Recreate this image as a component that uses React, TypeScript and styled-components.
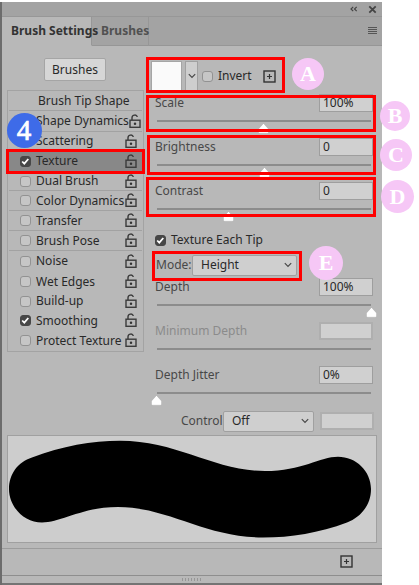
import React from "react";
import styled, { createGlobalStyle } from "styled-components";

const Global = createGlobalStyle`
  * { box-sizing: border-box; }
  body { margin: 0; background: #fff; font-family: "Noto Sans", "Open Sans", sans-serif; font-size: 12px; color: #292929; }
`;

const Page = styled.main`
  position: relative;
  width: 419px;
  height: 585px;
  overflow: hidden;
  padding-top: 2px;
`;

const Panel = styled.section`
  width: 382px;
  height: 583px;
  display: flex;
  flex-direction: column;
  background: #b8b8b8;
  border-left: 2px solid #6c6c6c;
`;

const TitleBar = styled.header`
  height: 14px;
  flex: none;
  display: flex;
  align-items: center;
  justify-content: flex-end;
  gap: 10px;
  padding-right: 5px;
  background: #a3a3a3;
`;

const TabBar = styled.nav`
  height: 30px;
  flex: none;
  display: flex;
  background: #a3a3a3;
`;

const Tab = styled.div<{ $active?: boolean; $width: number }>`
  width: ${(p) => p.$width}px;
  padding: 5px 0 0 9px;
  line-height: 18px;
  font-weight: 700;
  white-space: nowrap;
  color: ${(p) => (p.$active ? "#333" : "#515151")};
  background: ${(p) => (p.$active ? "#b8b8b8" : "transparent")};
  border-top: 1px solid #979797;
  border-right: 1px solid #979797;
  border-bottom: 1px solid ${(p) => (p.$active ? "#b8b8b8" : "#969696")};
`;

const TabFill = styled.div`
  flex: 1;
  display: flex;
  justify-content: flex-end;
  padding: 10px 5px 0 0;
  border-top: 1px solid #979797;
  border-bottom: 1px solid #969696;
`;

const Text = styled.span<{ $w?: number; $dim?: boolean; $soft?: boolean }>`
  display: block;
  width: ${(p) => (p.$w ? p.$w + "px" : "auto")};
  line-height: 16px;
  white-space: nowrap;
  color: ${(p) => (p.$dim ? "#8b8b8b" : p.$soft ? "#484848" : "#292929")};
`;

const Body = styled.div`
  height: 389px;
  flex: none;
  display: flex;
`;

const Sidebar = styled.aside`
  width: 142px;
  padding: 12px 0 0 5px;
`;

const BrushesButton = styled.button`
  display: block;
  width: 62px;
  height: 23px;
  margin: 0 0 9px 37px;
  padding: 0;
  font: inherit;
  color: #292929;
  background: #d6d6d6;
  border: 1px solid #a5a5a5;
  border-radius: 2px;
`;

const OptionList = styled.div`
  height: 262px;
  width: 137px;
  border: 1px solid #a3a3a3;
  padding: 0 1px;
`;

const Option = styled.div<{ $h: number; $line?: boolean; $selected?: boolean }>`
  height: ${(p) => p.$h}px;
  display: flex;
  align-items: center;
  padding-left: 11px;
  background: ${(p) => (p.$selected ? "#888" : "transparent")};
  border-bottom: 1px solid ${(p) => (p.$line ? "#a2a2a2" : "transparent")};
`;

const TipTitle = styled(Text)`
  margin-left: 18px;
`;

const OptionText = styled(Text)`
  flex: 1;
  margin-left: 5px;
`;

const Check = styled.span<{ $on?: boolean }>`
  width: 11px;
  height: 11px;
  flex: none;
  display: flex;
  align-items: center;
  justify-content: center;
  border-radius: 3px;
  border: 1px solid ${(p) => (p.$on ? "#474747" : "#929292")};
  background: ${(p) => (p.$on ? "#474747" : "#c6c6c6")};
`;

const LockSlot = styled.span`
  width: 17px;
  flex: none;
  display: flex;
`;

const Controls = styled.div`
  width: 236px;
  padding: 12px 0 0 5px;
`;

const TextureRow = styled.div`
  height: 36px;
  display: flex;
  align-items: center;
  padding-left: 2px;
`;

const Swatch = styled.div`
  width: 31px;
  height: 31px;
  border: 1px solid #a5a5a5;
  background: #fafafa;
`;

const Drop = styled.div`
  width: 13px;
  height: 31px;
  margin: 0 4px 0 3px;
  display: flex;
  align-items: center;
  justify-content: center;
  border: 1px solid #a1a1a1;
  background: #cecece;
`;

const InvertText = styled(Text)`
  width: 45px;
  margin-left: 5px;
`;

const SliderBlock = styled.div<{ $h: number }>`
  height: ${(p) => p.$h}px;
  padding-left: 6px;
`;

const SliderHead = styled.div`
  height: 18px;
  display: flex;
  justify-content: space-between;
  align-items: center;
  padding-right: 7px;
`;

const Field = styled.div<{ $off?: boolean }>`
  width: 54px;
  height: 18px;
  padding-left: 3px;
  line-height: 16px;
  background: #d0d0d0;
  border: ${(p) => (p.$off ? "2px solid #afafaf" : "1px solid #9e9e9e")};
  color: #292929;
`;

const Rail = styled.div`
  height: 2px;
  width: 214px;
  margin: 8px 0 0 2px;
  background: #8c8c8c;
`;

const Thumb = styled.svg<{ $x: number }>`
  display: block;
  margin-top: 1px;
  margin-left: ${(p) => p.$x}px;
`;

const TipRow = styled.div`
  height: 24px;
  margin-top: 9px;
  display: flex;
  align-items: center;
  gap: 5px;
  padding-left: 6px;
`;

const ModeRow = styled.div<{ $control?: boolean }>`
  display: flex;
  align-items: center;
  height: ${(p) => (p.$control ? 20 : 26)}px;
  padding-left: ${(p) => (p.$control ? 32 : 7)}px;
`;

const Select = styled.div<{ $w: number }>`
  width: ${(p) => p.$w}px;
  height: 21px;
  display: flex;
  align-items: center;
  justify-content: space-between;
  padding: 0 4px 0 8px;
  margin-right: 6px;
  background: #cfcfcf;
  border: 1px solid #a0a0a0;
  border-radius: 2px;
`;

const Preview = styled.div`
  width: 370px;
  height: 108px;
  flex: none;
  margin-left: 5px;
  background: #cdcdcd;
  border: 1px solid #a0a0a0;
  svg { display: block; }
`;

const Footer = styled.footer`
  height: 27px;
  flex: none;
  margin-top: 5px;
  padding: 6px 29px 0 0;
  display: flex;
  justify-content: flex-end;
  border-top: 1px solid #9c9c9c;
`;

const Grip = styled.div`
  height: 10px;
  flex: none;
  display: flex;
  align-items: center;
  justify-content: center;
  gap: 1px;
  border-top: 1px solid #8e8e8e;
  border-bottom: 2px solid #747474;
`;

const Tick = styled.i`
  width: 1px;
  height: 3px;
  margin-right: 1px;
  background: #969696;
`;

/* Callouts float over the panel and label regions of it. */
const Frame = styled.div<{ $x: number; $y: number; $w: number; $h: number }>`
  position: absolute;
  left: ${(p) => p.$x}px;
  top: ${(p) => p.$y}px;
  width: ${(p) => p.$w}px;
  height: ${(p) => p.$h}px;
  border: 3px solid #fe0000;
`;

const Badge = styled.div<{ $x: number; $y: number; $d: number; $blue?: boolean }>`
  position: absolute;
  left: ${(p) => p.$x - p.$d / 2}px;
  top: ${(p) => p.$y - p.$d / 2}px;
  width: ${(p) => p.$d}px;
  height: ${(p) => p.$d}px;
  border-radius: 50%;
  background: ${(p) => (p.$blue ? "#3e6be8" : "#f6c7f6")};
  color: #fff;
  font-family: "Liberation Serif", serif;
  font-weight: ${(p) => (p.$blue ? 400 : 700)};
  font-size: ${(p) => (p.$blue ? 29 : 22)}px;
  -webkit-text-stroke: ${(p) => (p.$blue ? "0.7px #fff" : "0")};
  line-height: ${(p) => p.$d}px;
  text-align: center;
`;

const Chevron = () => (
  <svg width="8" height="6" viewBox="0 0 8 6" fill="none" stroke="#484848" strokeWidth="1.2"><path d="M.8 1.2 4 4.4 7.2 1.2" /></svg>
);

const PlusBox = () => (
  <svg width="13" height="13" viewBox="0 0 13 13" fill="none" stroke="#333">
    <rect x="1" y="1" width="11" height="11" strokeWidth="1.4" /><path d="M6.5 4v5M4 6.5h5" strokeWidth="1.2" />
  </svg>
);

const Lock = () => (
  <svg width="12" height="15" viewBox="0 0 12 15" fill="none" stroke="#3b3b3b">
    <path d="M3 6V3.7C3 .4 8.2.2 8.2 3.1" strokeWidth="1.4" />
    <rect x="1" y="6.2" width="10" height="7.1" strokeWidth="1.4" />
    <circle cx="6" cy="9.8" r="1.25" fill="#333" stroke="none" />
  </svg>
);

const CheckBox = ({ on }: { on?: boolean }) => (
  <Check $on={on}>
    {on && <svg width="9" height="9" viewBox="0 0 9 9" fill="none" stroke="#fff" strokeWidth="1.8"><path d="m1.2 4.5 2.1 2.2 4-4.7" /></svg>}
  </Check>
);

type SliderProps = { label: string; value?: string; at?: number; h: number; off?: boolean };
const Slider = ({ label, value, at, h, off }: SliderProps) => (
  <SliderBlock $h={h}>
    <SliderHead>
      <Text $soft $dim={off}>{label}</Text>
      <Field $off={off}>{value}</Field>
    </SliderHead>
    <Rail />
    {at !== undefined && (
      <Thumb $x={at} width="11" height="11" viewBox="0 0 11 11"><path d="M5.5.4 10.5 6v3.2q0 1-1 1h-8q-1 0-1-1V6Z" fill="#fff" stroke="#999" strokeWidth=".3" /></Thumb>
    )}
  </SliderBlock>
);

const options = [
  { name: "Shape Dynamics", h: 21, line: true },
  { name: "Scattering", h: 19, line: true },
  { name: "Texture", h: 21, on: true, selected: true },
  { name: "Dual Brush", h: 19, line: true },
  { name: "Color Dynamics", h: 20, line: true },
  { name: "Transfer", h: 20, line: true },
  { name: "Brush Pose", h: 20, line: true },
  { name: "Noise", h: 21 },
  { name: "Wet Edges", h: 20 },
  { name: "Build-up", h: 19 },
  { name: "Smoothing", h: 20, on: true },
  { name: "Protect Texture", h: 20 },
];

const frames = [
  [146, 57, 139, 36],
  [146, 95, 230, 37],
  [147, 135, 229, 40],
  [146, 177, 230, 40],
  [152, 251, 150, 30],
  [6, 149, 139, 25],
];

export default function App() {
  return (
    <>
      <Global />
      <Page>
        <Panel>
          <TitleBar>
            <svg width="8" height="6" viewBox="0 0 8 6" fill="none" stroke="#444" strokeWidth="1.2"><path d="M3.2.8 1 3l2.2 2.2M6.7.8 4.5 3l2.2 2.2" /></svg>
            <svg width="9" height="9" viewBox="0 0 9 9" stroke="#444" strokeWidth="1.8"><path d="m1.3 1.3 6.4 6.4M7.7 1.3 1.3 7.7" /></svg>
          </TitleBar>
          <TabBar>
            <Tab $active $width={90}>Brush Settings</Tab>
            <Tab $width={57}>Brushes</Tab>
            <TabFill>
              <svg width="9" height="8" viewBox="0 0 9 8" stroke="#555"><path d="M0 .5h9M0 2.5h9M0 4.5h9M0 6.5h9" /></svg>
            </TabFill>
          </TabBar>
          <Body>
            <Sidebar>
              <BrushesButton>Brushes</BrushesButton>
              <OptionList>
                <Option $h={20} $line><TipTitle>Brush Tip Shape</TipTitle></Option>
                {options.map((o) => (
                  <Option key={o.name} $h={o.h} $line={o.line} $selected={o.selected}>
                    <CheckBox on={o.on} />
                    <OptionText>{o.name}</OptionText>
                    <LockSlot><Lock /></LockSlot>
                  </Option>
                ))}
              </OptionList>
            </Sidebar>
            <Controls>
              <TextureRow>
                <Swatch />
                <Drop><Chevron /></Drop>
                <CheckBox />
                <InvertText>Invert</InvertText>
                <PlusBox />
              </TextureRow>
              <Slider label="Scale" value="100%" at={103} h={44} />
              <Slider label="Brightness" value="0" at={104} h={44} />
              <Slider label="Contrast" value="0" at={68} h={37} />
              <TipRow><CheckBox on /><Text>Texture Each Tip</Text></TipRow>
              <ModeRow>
                <Text $soft $w={36}>Mode:</Text>
                <Select $w={105}><Text>Height</Text><Chevron /></Select>
              </ModeRow>
              <Slider label="Depth" value="100%" at={211} h={44} />
              <Slider label="Minimum Depth" h={44} off />
              <Slider label="Depth Jitter" value="0%" at={-4} h={45} />
              <ModeRow $control>
                <Text $soft $w={42}>Control:</Text>
                <Select $w={91}><Text>Off</Text><Chevron /></Select>
                <Field $off />
              </ModeRow>
            </Controls>
          </Body>
          <Preview>
            <svg width="368" height="106" viewBox="8 436 368 106">
              <path d="M32 457.5C62 446 92 440.7 120 440.7C178 440.7 214 471 265 471C302 471 320 456.7 338 456.7C356 456.7 371 471 371 489C371 505 361 517 347 522.5C319 533 291 537.5 263 537.5C205 537.5 168 507 118 507C82 507 61 522.5 42 522.5C24 522.5 9 507 9 489C9 474 18 462 32 457.5Z" />
            </svg>
          </Preview>
          <Footer><PlusBox /></Footer>
          <Grip>{Array.from({ length: 7 }, (_, i) => <Tick key={i} />)}</Grip>
        </Panel>
        {frames.map(([x, y, w, h]) => <Frame key={`${x}-${y}`} $x={x} $y={y} $w={w} $h={h} />)}
        <Badge $x={24} $y={130.5} $d={35} $blue>4</Badge>
        <Badge $x={308} $y={74} $d={32}>A</Badge>
        <Badge $x={395} $y={116} $d={30}>B</Badge>
        <Badge $x={396} $y={155} $d={32}>C</Badge>
        <Badge $x={397.5} $y={196} $d={33}>D</Badge>
        <Badge $x={326} $y={263} $d={34}>E</Badge>
      </Page>
    </>
  );
}
